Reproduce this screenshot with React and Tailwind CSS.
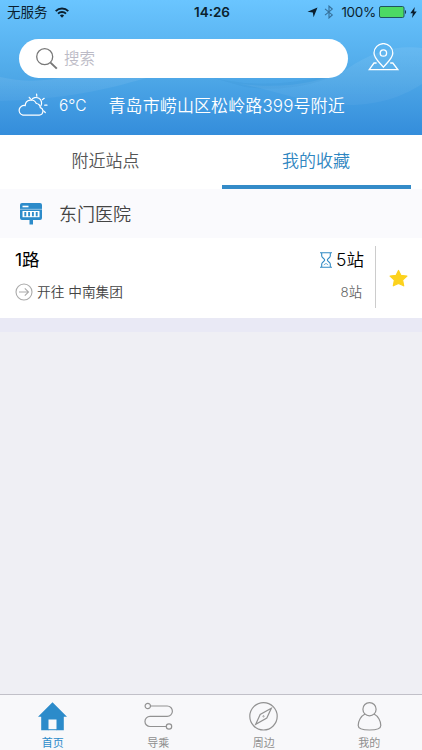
import React from 'react';

// Status bar
const StatusBar = () => (
  <div className="grid h-6 grid-cols-3 items-center pl-[7px] pr-[5px] text-[13.5px] text-[#0b1f2e]">
    <div className="flex items-center">
      <span className="leading-6">无服务</span>
      <svg className="ml-[7px] h-[11px] w-[14px]" viewBox="0 0 14 11">
        <g fill="none" stroke="currentColor" strokeWidth="1.9">
          <path d="M.7 4.1a9 9 0 0 1 12.6 0" />
          <path d="M3 6.6a5.8 5.8 0 0 1 8 0" />
        </g>
        <path d="M4.9 8.5a3 3 0 0 1 4.2 0L7 10.7Z" fill="currentColor" />
      </svg>
    </div>
    <span className="text-center text-[13.5px] font-semibold">14:26</span>
    <div className="flex items-center justify-end">
      <svg className="h-[11px] w-[11px]" viewBox="0 0 11 11">
        <path d="M10.5.5 6.6 10.3 5.8 5.5.5 4.7Z" fill="currentColor" />
      </svg>
      <svg className="ml-[6px] h-[14px] w-[10px] text-[#356f99]" viewBox="0 0 10 14">
        <path d="m1 3.8 7.3 6.1L5 12.9V1.1l3.3 3L1 10.2" fill="none" stroke="currentColor" strokeWidth="1.1" />
      </svg>
      <span className="ml-[7px] tracking-[-.3px]">100%</span>
      <svg className="ml-[3px] h-[12px] w-[28px]" viewBox="0 0 28 12">
        <rect x=".5" y=".5" width="24.5" height="11" rx="1.5" fill="#4cd964" stroke="#1e5461" />
        <path d="M26 4c1.5.6 1.5 3.4 0 4Z" fill="#17394f" />
      </svg>
      <svg className="ml-[3px] h-[11px] w-[7px]" viewBox="0 0 7 11">
        <path d="M4.8 0 .3 6.2h2.5L2 11l4.7-6.4H4.1Z" fill="currentColor" />
      </svg>
    </div>
  </div>
);

const WeatherIcon = () => (
  <svg className="h-6 w-[30px]" viewBox="0 0 30 24" fill="none" stroke="#fff" strokeWidth="1.2" strokeLinecap="round" strokeLinejoin="round">
    <path d="M4.9 22.2h16.4a3.9 3.9 0 0 0 .9-7.6 4 4 0 0 0-3.9-4.1 5.8 5.8 0 0 0-11.1 2.1A4.8 4.8 0 0 0 4.9 22.2Z" />
    <path d="M13.2 7.2a5.6 5.6 0 1 1 9.6 5.8" />
    <path d="m18.6 1 .2 2.2M11.2 4.3l1.3 1.5M26.2 5.3l-1.9 1.4M29 12.2h-2.3M27.3 19.5l-1.7-1.6" />
  </svg>
);

const MapPinIcon = () => (
  <svg className="h-[29px] w-[31px]" viewBox="0 0 31 29" fill="none" stroke="#fff" strokeWidth="1.3">
    <path d="M15.4 24.2C11.5 19.2 6 15.4 6 10a9.4 9.4 0 0 1 18.8 0c0 5.4-5.5 9.2-9.4 14.2Z" />
    <circle cx="15.4" cy="10" r="3.2" />
    <path d="M8.6 20H6L1.2 26.6h28.6L24.8 20h-2.6" />
  </svg>
);

const Header = () => (
  <header className="relative h-[135px] bg-linear-to-b from-[#6ac5ff] via-[#4fa9e8] via-55% to-[#348ddb]">
    {/* soft waves behind the search bar */}
    <svg className="absolute inset-0 h-[135px] w-full" viewBox="0 0 422 135" preserveAspectRatio="none">
      <defs>
        <linearGradient id="wave" x1="0" y1="0" x2="0" y2="1">
          <stop offset="0" stopColor="#fff" stopOpacity=".08" />
          <stop offset="1" stopColor="#fff" stopOpacity=".04" />
        </linearGradient>
      </defs>
      <path d="M0 77C22 82 44 82 70 76L146 78C105 90 65 99 0 101Z" fill="url(#wave)" />
      <path d="M210 77C250 87 285 85 325 76L346 70C318 85 285 92 245 87Z" fill="#1c6eb8" fillOpacity=".08" />
      <path d="M422 48C395 45 372 52 347 69 320 83 285 89 240 84 275 90 310 106 355 105 385 103 405 95 422 84Z" fill="url(#wave)" />
    </svg>
    <div className="relative">
      <StatusBar />
      <div className="flex items-center pl-[19px] pr-[23px] pt-[15px]">
        <div className="flex h-[39px] w-[329px] items-center rounded-full bg-white pl-[17px]">
          <svg className="h-[22px] w-[22px]" viewBox="0 0 22 22" fill="none" stroke="#777">
            <circle cx="8.7" cy="8.7" r="8" strokeWidth="1.3" />
            <path d="m14.5 14.6 6.3 6" strokeWidth="2" />
          </svg>
          <span className="ml-[6px] text-[15.5px] font-[350] text-[#bcbbc6]">搜索</span>
        </div>
        <div className="ml-[20px] -mt-[3px]">
          <MapPinIcon />
        </div>
      </div>
      <div className="flex h-[54px] items-center pl-[18px] text-white">
        <WeatherIcon />
        <span className="ml-[11px] mt-[2px] text-[15.5px] font-[350]">6°C</span>
        <span className="ml-[22px] mt-[3px] whitespace-nowrap text-[17px] font-[350] tracking-[.1px]">青岛市崂山区松岭路399号附近</span>
      </div>
    </div>
  </header>
);

const Tabs = () => (
  <div className="grid h-[54px] grid-cols-2 bg-white text-[17px] font-[350]">
    <div className="flex items-center justify-center pb-[1px] text-[#555]">附近站点</div>
    <div className="mx-[11px] flex items-center justify-center border-b-4 border-[#348bc8] pt-[3px] pr-[1px] text-[#2f86c1]">我的收藏</div>
  </div>
);

const StationRow = () => (
  <div className="flex h-[49px] items-center bg-[#fafafd] pl-[20px]">
    <svg className="h-[22px] w-[22px]" viewBox="0 0 22 22">
      <path d="M2 0h18a2 2 0 0 1 2 2v13a2 2 0 0 1-2 2h-7v4.5H9.5V17H2a2 2 0 0 1-2-2V2a2 2 0 0 1 2-2Z" fill="#2c8bca" />
      <path d="M2.5 3.500h6" stroke="#fff" strokeWidth="1.6" />
      <path d="M0 6.300h22" stroke="#fff" strokeWidth=".7" strokeOpacity=".7" />
      <path d="M2.500 8h17v6.200h-17Z" fill="#fff" />
      <path d="M5.300 9v4.200M9.100 9v4.200M12.900 9v4.200M16.700 9v4.200" stroke="#2c8bca" strokeWidth="1.900" />
    </svg>
    <span className="ml-[17px] mt-[1px] text-[18px] font-[350] text-[#444]">东门医院</span>
  </div>
);

const RouteCard = () => (
  <div className="flex h-[80px] bg-white">
    <div className="flex-1 pl-[15px] pt-[9px]">
      <div className="flex h-[26px] items-center text-[17.5px] text-black">
        <span>1路</span>
        <svg className="ml-auto h-[16px] w-[12px]" viewBox="0 0 12 16" fill="none" stroke="#328bc5" strokeWidth="1.1">
          <path d="M0 .7h12M0 15.300h12M1.700.7v3.200c0 2 3 2.500 3 4.100s-3 2.100-3 4.100v3.200M10.300.7v3.200c0 2-3 2.500-3 4.100s3 2.100 3 4.100v3.200" />
          <path d="M3.800 12.900 6 11.400l2.200 1.500" strokeWidth=".7" />
        </svg>
        <span className="ml-[4px] mr-[11px] font-[350]">5站</span>
      </div>
      <div className="mt-[9px] flex h-[20px] items-center text-[13.7px] font-[350] text-[#444]">
        <svg className="h-[18px] w-[18px]" viewBox="0 0 18 18" fill="none" stroke="#aaa" strokeWidth="1.1">
          <circle cx="9" cy="9" r="8" />
          <path d="M4 9h9.500M9.800 5.300 13.500 9l-3.700 3.700" />
        </svg>
        <span className="ml-[4px] mt-[1px]">开往 中南集团</span>
        <span className="ml-auto mr-[13px] mt-[1px] text-[13.3px] text-[#666]">8站</span>
      </div>
    </div>
    <div className="mb-[10px] mt-[8px] w-px bg-[#ccc]" />
    <div className="flex w-[46px] items-center justify-center pr-[2px]">
      <svg className="h-[18px] w-[19px]" viewBox="0 0 19 18">
        <path d="m9.500 1.500 2.500 4.900 5.900.7-4.300 3.900 1.100 5.800-5.200-2.300-5.200 2.300L5.400 11 1.100 7.100 7 6.400Z" fill="#fcd21d" stroke="#fcd21d" strokeWidth="1.2" strokeLinejoin="round" />
      </svg>
    </div>
  </div>
);

const HomeIcon = () => (
  <svg className="h-[29px] w-[29px]" viewBox="0 0 29 29">
    <path d="M14.500.3 29 14.800h-3.200v13.400H18.500V17.500h-8v10.700H3.200V14.800H0Z" fill="#2c8bca" />
    <path d="M10 27.200h9v1h-9Z" fill="#2c8bca" />
  </svg>
);

const RouteIcon = () => (
  <svg className="h-[29px] w-[29px]" viewBox="0 0 29 29" fill="none" stroke="#929292" strokeWidth="1.2">
    <circle cx="3.800" cy="4" r="2.700" />
    <circle cx="25" cy="24.500" r="2.700" />
    <path d="M6.500 4h16.700a5.200 5.200 0 0 1 0 10.400H6A5 5 0 0 0 6 24.500h16.300" />
  </svg>
);

const CompassIcon = () => (
  <svg className="h-[29px] w-[29px]" viewBox="0 0 29 29" fill="none" stroke="#929292" strokeWidth="1.2">
    <circle cx="14.500" cy="14.300" r="13.700" />
    <path d="M22.300 6.300 11.200 12.500 6.700 22.300l11.100-6.200Z" />
    <circle cx="14.500" cy="14.300" r=".7" strokeWidth=".8" />
  </svg>
);

const PersonIcon = () => (
  <svg className="h-[29px] w-[29px]" viewBox="0 0 29 29" fill="none" stroke="#929292" strokeWidth="1.2">
    <circle cx="14.500" cy="7.200" r="6.600" />
    <path d="M10 12C6 14 3.200 19 3.200 23.500c0 3.500 4 4.500 11.300 4.500s11.300-1 11.300-4.500C25.800 19 23 14 19 12" />
  </svg>
);

const navItems = [
  { label: '首页', icon: HomeIcon, active: true },
  { label: '导乘', icon: RouteIcon },
  { label: '周边', icon: CompassIcon },
  { label: '我的', icon: PersonIcon },
];

const BottomNav = () => (
  <nav className="grid h-[56px] grid-cols-4 border-t border-[#c1c0c8] bg-[#f8f8fa]">
    {navItems.map(({ label, icon: Icon, active }) => (
      <div
        key={label}
        className={`flex flex-col items-center pt-[7px] text-[11px] leading-[14px] ${
          active ? 'text-[#2c8bca]' : 'text-[#8f8f8f]'
        }`}
      >
        <Icon />
        <span className="mt-[5px]">{label}</span>
      </div>
    ))}
  </nav>
);

export default function App() {
  return (
    <div className="flex h-[750px] w-[422px] flex-col overflow-hidden bg-[#efeff4] font-['Inter','Noto_Sans_CJK_SC',sans-serif]">
      <Header />
      <Tabs />
      <StationRow />
      <RouteCard />
      <div className="h-[14px] bg-[#e9e9f5]" />
      <div className="flex-1" />
      <BottomNav />
    </div>
  );
}
